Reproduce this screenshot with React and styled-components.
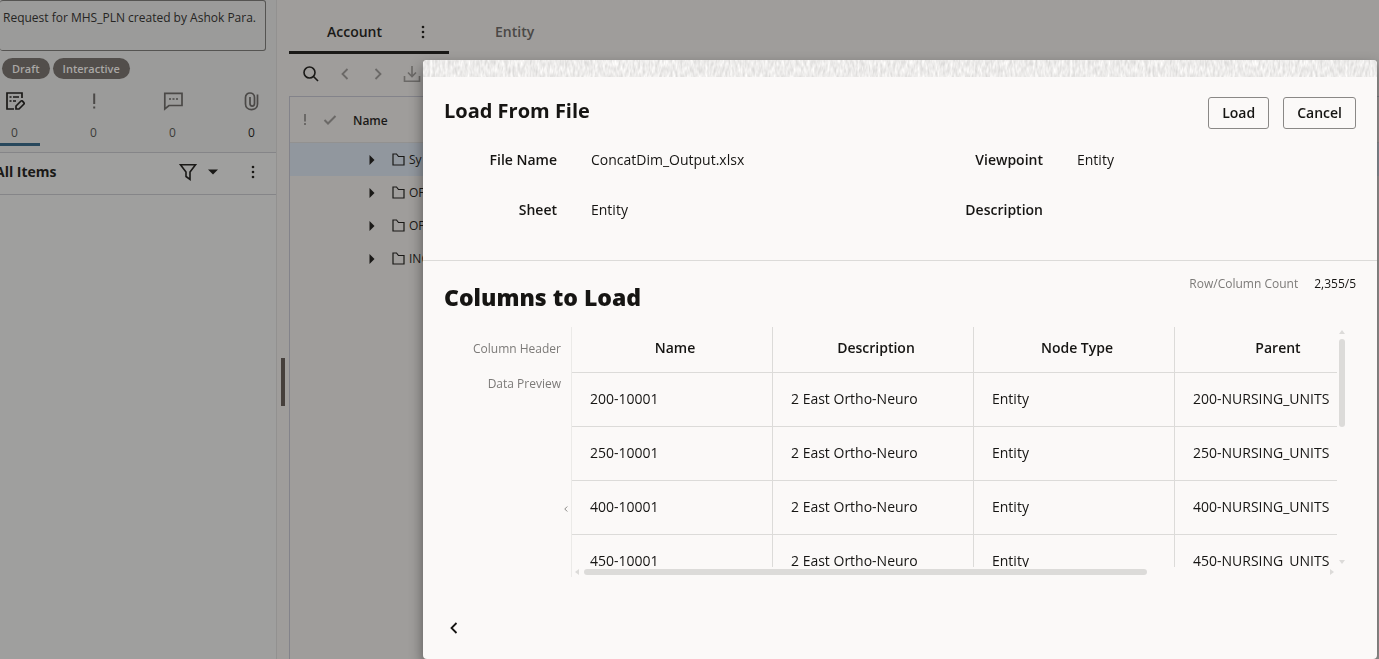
import styled, { createGlobalStyle } from 'styled-components';

const textColor = '#161513';
const lineColor = '#dcdbd9';
const mutedColor = '#7c7a78';
const dimText = '#1a1917';
const dimMuted = '#4b4947';

const columns = ['Name', 'Description', 'Node Type', 'Parent'];
const rows = ['200', '250', '400', '450'].map(prefix => [
  `${prefix}-10001`,
  '2 East Ortho-Neuro',
  'Entity',
  `${prefix}-NURSING_UNITS`,
]);
const nodes = ['Sy', 'OF', 'OF', 'ING'];

function Dots() {
  return (
    <svg width="16" height="16" viewBox="0 0 16 16" fill="currentColor">
      <circle cx="8" cy="3" r="1.3" />
      <circle cx="8" cy="8" r="1.3" />
      <circle cx="8" cy="13" r="1.3" />
    </svg>
  );
}

function Chevron({ left, size = 16 }) {
  return (
    <svg width={size} height={size} viewBox="0 0 16 16" fill="none" stroke="currentColor" strokeWidth="1.8">
      <path d={left ? 'M10.5 3L5.5 8L10.5 13' : 'M5.5 3L10.5 8L5.5 13'} />
    </svg>
  );
}

function Sidebar() {
  return (
    <SidePanel>
      <RequestText aria-label="Request description" readOnly value="Request for MHS_PLN created by Ashok Para." />
      <Tags>
        <Tag>Draft</Tag>
        <Tag>Interactive</Tag>
      </Tags>
      <Counters>
        <Counter $active $color={dimText}>
          <svg width="20" height="20" viewBox="0 0 20 20" fill="none" stroke="currentColor" strokeWidth="1.7">
            <path d="M9 18H2V2H17V7" />
            <path d="M4.5 6H6.5M8 6H14M4.5 10H6.5M8 10H11" strokeWidth="1.5" />
            <path d="M11 18V15L16 10C17 9 20 12 19 13L14 18Z" />
          </svg>
          <Count>0</Count>
        </Counter>
        <Counter $color={dimMuted}>
          <svg width="20" height="20" viewBox="0 0 20 20" fill="currentColor">
            <path d="M9.2 2.5H11.2V13H9.2ZM9.2 15.5H11.2V17.5H9.2Z" />
          </svg>
          <Count>0</Count>
        </Counter>
        <Counter $color={dimMuted}>
          <svg width="20" height="20" viewBox="0 0 20 20" fill="none" stroke="currentColor" strokeWidth="1.7">
            <path d="M1.8 18V2.3H19V14.5H6L1.8 18Z" />
            <path d="M6 8H8M9.5 8H11.5M13 8H15" />
          </svg>
          <Count>0</Count>
        </Counter>
        <Counter $color={dimMuted} $countColor={dimText}>
          <svg width="20" height="20" viewBox="0 0 20 20" fill="none" stroke="currentColor" strokeWidth="1.7">
            <path d="M15.5 3.5V13C15.5 20.5 3.5 20.5 3.5 13V6.5C3.5 0.5 12.5 0.5 12.5 6.5V12.5C12.5 16 8 16 8 12.5V6" />
          </svg>
          <Count>0</Count>
        </Counter>
      </Counters>
      <ItemsBar>
        <ItemsTitle>All Items</ItemsTitle>
        <FilterButton aria-label="Filter">
          <svg width="20" height="20" viewBox="0 0 20 20" fill="none" stroke="currentColor" strokeWidth="1.6">
            <path d="M2.5 2.8H17.5L12 10V17.5L8 14.5V10Z" />
          </svg>
          <svg width="10" height="6" viewBox="0 0 10 6" fill="currentColor"><path d="M0 0.5H10L5 5.5Z" /></svg>
        </FilterButton>
        <IconButton aria-label="More actions"><Dots /></IconButton>
      </ItemsBar>
      <ItemsBody />
    </SidePanel>
  );
}

function Workspace() {
  return (
    <Main>
      <Tabs>
        <Tab $active>
          <TabLabel>Account</TabLabel>
          <Dots />
        </Tab>
        <Tab><TabLabel>Entity</TabLabel></Tab>
      </Tabs>
      <Toolbar>
        <IconButton aria-label="Search">
          <svg width="18" height="18" viewBox="0 0 18 18" fill="none" stroke="currentColor" strokeWidth="1.6">
            <circle cx="7.5" cy="7.5" r="5.5" />
            <path d="M11.5 11.5L16 16" />
          </svg>
        </IconButton>
        <IconButton $dim aria-label="Previous"><Chevron left /></IconButton>
        <IconButton $dim aria-label="Next"><Chevron /></IconButton>
        <IconButton $dim aria-label="Download">
          <svg width="18" height="18" viewBox="0 0 18 18" fill="none" stroke="currentColor" strokeWidth="1.6">
            <path d="M9 1V11M5 7.5L9 11.5L13 7.5M1.5 11V16.2H16.5V11" />
          </svg>
        </IconButton>
      </Toolbar>
      <Tree>
        <TreeHeader>
          <svg width="16" height="16" viewBox="0 0 16 16" fill="#6b6967"><path d="M7 2H9V9.5H7ZM7 11H9V13H7Z" /></svg>
          <svg width="16" height="16" viewBox="0 0 16 16" fill="none" stroke="#6b6967" strokeWidth="2"><path d="M2.5 8L6 11.5L13.5 4" /></svg>
          <TreeTitle>Name</TreeTitle>
        </TreeHeader>
        {nodes.map((name, i) => (
          <TreeRow key={i} $selected={i === 0}>
            <svg width="6" height="10" viewBox="0 0 6 10" fill="currentColor"><path d="M0.5 0L5.5 5L0.5 10Z" /></svg>
            <FolderIcon width="13" height="13" viewBox="0 0 13 13" fill="none" stroke="currentColor" strokeWidth="1.2">
              <path d="M1 12V1H4.5L6.5 3.5H12V12Z" />
            </FolderIcon>
            {name}
          </TreeRow>
        ))}
      </Tree>
    </Main>
  );
}

function LoadDialog() {
  return (
    <Dialog role="dialog" aria-labelledby="dialog-title">
      <Strip aria-hidden="true">
        <filter id="grain" x="0" y="0" width="100%" height="100%" colorInterpolationFilters="sRGB">
          <feTurbulence type="fractalNoise" baseFrequency="0.4 0.14" numOctaves="2" seed="4" />
          <feColorMatrix values="0.22 0 0 0 0.82  0.22 0 0 0 0.815  0.22 0 0 0 0.81  0 0 0 0 1" />
        </filter>
        <rect width="100%" height="100%" filter="url(#grain)" />
      </Strip>
      <DialogTop>
        <TitleRow>
          <Title id="dialog-title">Load From File</Title>
          <Actions>
            <Button>Load</Button>
            <Button>Cancel</Button>
          </Actions>
        </TitleRow>
        <Details>
          <dt>File Name</dt>
          <dd>ConcatDim_Output.xlsx</dd>
          <dt>Viewpoint</dt>
          <dd>Entity</dd>
          <dt>Sheet</dt>
          <dd>Entity</dd>
          <dt>Description</dt>
          <dd />
        </Details>
      </DialogTop>
      <DialogBody>
        <SectionHead>
          <SectionTitle>Columns to Load</SectionTitle>
          <CountInfo>
            <span>Row/Column Count</span>
            <strong>2,355/5</strong>
          </CountInfo>
        </SectionHead>
        <Preview>
          <PreviewLabels>
            <span>Column Header</span>
            <span>Data Preview</span>
            <Collapse aria-label="Collapse"><Chevron left size={8} /></Collapse>
          </PreviewLabels>
          <GridArea>
            <Viewport>
              <Table>
                <thead>
                  <tr>{columns.map(c => <th key={c} scope="col">{c}</th>)}</tr>
                </thead>
                <tbody>
                  {rows.map(row => (
                    <tr key={row[0]}>{row.map(cell => <td key={cell}>{cell}</td>)}</tr>
                  ))}
                </tbody>
              </Table>
            </Viewport>
            <VerticalBar>
              <Arrow viewBox="0 0 6 6"><path d="M0 5H6L3 1Z" /></Arrow>
              <VerticalThumb />
              <Arrow viewBox="0 0 6 6"><path d="M0 1H6L3 5Z" /></Arrow>
            </VerticalBar>
            <HorizontalBar>
              <Arrow viewBox="0 0 6 6"><path d="M5 0V6L1 3Z" /></Arrow>
              <HorizontalThumb />
              <Arrow viewBox="0 0 6 6"><path d="M1 0V6L5 3Z" /></Arrow>
            </HorizontalBar>
          </GridArea>
        </Preview>
      </DialogBody>
      <DialogFooter>
        <IconButton aria-label="Back"><Chevron left /></IconButton>
      </DialogFooter>
    </Dialog>
  );
}

export default function App() {
  return (
    <>
      <GlobalStyle />
      <Page>
        <Sidebar />
        <Splitter><Handle /></Splitter>
        <Workspace />
      </Page>
      <LoadDialog />
    </>
  );
}

const GlobalStyle = createGlobalStyle`
  * {
    box-sizing: border-box;
  }
  body {
    margin: 0;
    overflow: hidden;
    color: ${textColor};
    font-family: "Open Sans", "Noto Sans", sans-serif;
    font-size: 14px;
    line-height: 20px;
  }
  svg {
    display: block;
    flex-shrink: 0;
  }
`;
const Page = styled.div`
  display: flex;
  height: 100vh;
  overflow: hidden;
  background: #9f9d9b;
  color: ${dimText};
`;
const SidePanel = styled.aside`
  display: flex;
  flex-direction: column;
  width: 277px;
  flex-shrink: 0;
  overflow: hidden;
  background: #9b9b9a;
  border-right: 1px solid #929190;
`;
const RequestText = styled.textarea`
  display: block;
  width: 266px;
  height: 51px;
  margin: 0;
  padding: 8px 3px;
  border: 1px solid #555452;
  border-left: none;
  border-radius: 3px;
  background: transparent;
  color: #262523;
  font: inherit;
  font-size: 12px;
  line-height: 18px;
  white-space: nowrap;
  overflow: hidden;
  resize: none;
  outline: none;
`;
const Tags = styled.div`
  display: flex;
  gap: 3px;
  padding: 7px 2px 0;
`;
const Tag = styled.span`
  padding: 0 10px;
  border-radius: 11px;
  background: #524e4b;
  color: #a9a7a5;
  font-size: 11px;
  font-weight: 600;
  line-height: 21px;
`;
const Counters = styled.div`
  display: flex;
  height: 74px;
  margin-left: -25px;
  padding-top: 12px;
  border-bottom: 1px solid #858588;
`;
const Counter = styled.div`
  display: flex;
  flex-direction: column;
  align-items: center;
  gap: 12px;
  width: 79px;
  height: 55px;
  flex-shrink: 0;
  color: ${props => props.$color};

  > span {
    color: ${props => props.$countColor || '#3d3b39'};
  }
  ${props => props.$active &&
    `background: linear-gradient(#27475c, #27475c) bottom center / 51px 3px no-repeat;`
  }
`;
const Count = styled.span`
  font-size: 12px;
`;
const ItemsBar = styled.div`
  display: flex;
  align-items: center;
  height: 42px;
  padding: 0 15px 3px 0;
  background: #9f9f9e;
  border-bottom: 1px solid #858588;
`;
const ItemsTitle = styled.h2`
  flex: 1;
  margin: 0 0 0 -5px;
  font-size: 14px;
  font-weight: 700;
`;
const ItemsBody = styled.div`
  flex: 1;
  background: #9f9f9e;
`;
const IconButton = styled.button`
  display: flex;
  align-items: center;
  justify-content: center;
  padding: 0;
  border: none;
  background: none;
  color: ${props => props.$dim ? '#6b6967' : 'inherit'};
`;
const FilterButton = styled(IconButton)`
  gap: 10px;
  margin-right: 27px;
`;
const Splitter = styled.div`
  display: flex;
  align-items: center;
  justify-content: center;
  width: 12px;
  padding-top: 105px;
  flex-shrink: 0;
`;
const Handle = styled.div`
  width: 4px;
  height: 48px;
  background: #46403c;
`;
const Main = styled.main`
  display: flex;
  flex: 1;
  flex-direction: column;
  min-width: 0;
`;
const Tabs = styled.div`
  display: flex;
  gap: 8px;
  padding-top: 13px;
`;
const Tab = styled.div`
  display: flex;
  align-items: center;
  gap: 33px;
  width: 160px;
  height: 41px;
  padding-left: 38px;
  color: ${props => props.$active ? dimText : '#4a4846'};
  border-bottom: 3px solid ${props => props.$active ? dimText : 'transparent'};
  border-radius: 3px 3px 0 0;
`;
const TabLabel = styled.span`
  font-weight: 600;
`;
const Toolbar = styled.div`
  display: flex;
  align-items: center;
  gap: 17px;
  height: 42px;
  padding: 0 13px 2px;
`;
const Tree = styled.div`
  flex: 1;
  border-top: 1px solid #83838a;
  border-left: 1px solid #83838a;
`;
const TreeHeader = styled.div`
  display: flex;
  align-items: center;
  gap: 9px;
  height: 46px;
  padding: 0 7px;
  border-bottom: 1px solid #929190;
`;
const TreeTitle = styled.span`
  margin-left: 6px;
  padding-top: 2px;
  font-size: 12px;
  font-weight: 600;
`;
const TreeRow = styled.div`
  display: flex;
  align-items: center;
  height: 33px;
  padding-left: 79px;
  background: ${props => props.$selected ? '#91979e' : 'transparent'};
  font-size: 12px;
`;
const FolderIcon = styled.svg`
  margin: 0 4px 0 17px;
`;
const Dialog = styled.section`
  position: fixed;
  top: 60px;
  right: 2px;
  bottom: 0;
  left: 423px;
  display: flex;
  flex-direction: column;
  overflow: hidden;
  background: #fbf9f8;
  border-radius: 4px;
  box-shadow: 0 6px 14px rgba(0, 0, 0, 0.45);
`;
const Strip = styled.svg`
  width: 100%;
  height: 17px;
`;
const DialogTop = styled.div`
  padding: 20px 21px 40px;
  border-bottom: 1px solid ${lineColor};
`;
const TitleRow = styled.header`
  display: flex;
  justify-content: space-between;
`;
const Title = styled.h1`
  margin: 0;
  font-size: 20px;
  font-weight: 700;
  line-height: 28px;
`;
const Actions = styled.div`
  display: flex;
  gap: 14px;
`;
const Button = styled.button`
  height: 32px;
  padding: 0 13px;
  border: 1px solid #8a8886;
  border-radius: 3px;
  background: transparent;
  color: ${textColor};
  font: inherit;
  font-weight: 600;
`;
const Details = styled.dl`
  display: grid;
  grid-template-columns: 113px 1fr 113px 279px;
  gap: 30px 34px;
  margin: 21px 0 0;

  dt {
    font-weight: 600;
    text-align: right;
  }
  dd {
    margin: 0;
  }
`;
const DialogBody = styled.div`
  padding: 14px 21px 0;
`;
const SectionHead = styled.div`
  display: flex;
  justify-content: space-between;
  height: 52px;
`;
const SectionTitle = styled.h2`
  margin: 0;
  font-size: 23px;
  font-weight: 800;
  line-height: 44px;
`;
const CountInfo = styled.div`
  display: flex;
  gap: 16px;
  font-size: 12px;
  line-height: 18px;

  span {
    color: ${mutedColor};
  }
  strong {
    font-weight: 400;
  }
`;
const Preview = styled.div`
  display: flex;
`;
const PreviewLabels = styled.div`
  display: flex;
  flex-direction: column;
  align-items: flex-end;
  gap: 15px;
  width: 127px;
  padding: 12px 10px 0 0;
  color: ${mutedColor};
  font-size: 12px;
`;
const Collapse = styled(IconButton)`
  margin: 96px -9px 0 0;
`;
const GridArea = styled.div`
  display: grid;
  grid-template-columns: 1fr 10px;
  grid-template-rows: 240px 10px;
  flex: 1;
  min-width: 0;
  margin-right: 9px;
  border-left: 1px solid #ebeae8;
`;
const Viewport = styled.div`
  overflow: hidden;
`;
const Table = styled.table`
  width: 804px;
  table-layout: fixed;
  border-collapse: separate;
  border-spacing: 0;

  th, td {
    border-right: 1px solid ${lineColor};
    border-bottom: 1px solid ${lineColor};
    white-space: nowrap;
  }
  th {
    height: 46px;
    padding: 0 0 4px 6px;
    font-weight: 600;
  }
  td {
    height: 54px;
    padding: 0 18px 2px;
  }
`;
const VerticalBar = styled.div`
  display: flex;
  flex-direction: column;
  align-items: center;
  gap: 4px;
  padding: 2px 0;
`;
const VerticalThumb = styled.div`
  width: 6px;
  height: 88px;
  margin-bottom: auto;
  border-radius: 3px;
  background: ${lineColor};
`;
const HorizontalBar = styled.div`
  display: flex;
  align-items: center;
  justify-content: space-between;
  gap: 4px;
  padding: 0 2px;
`;
const HorizontalThumb = styled.div`
  width: 74%;
  height: 6px;
  margin-right: auto;
  border-radius: 3px;
  background: ${lineColor};
`;
const Arrow = styled.svg`
  width: 6px;
  height: 6px;
  fill: ${lineColor};
`;
const DialogFooter = styled.footer`
  display: flex;
  padding: 43px 23px;
`;
